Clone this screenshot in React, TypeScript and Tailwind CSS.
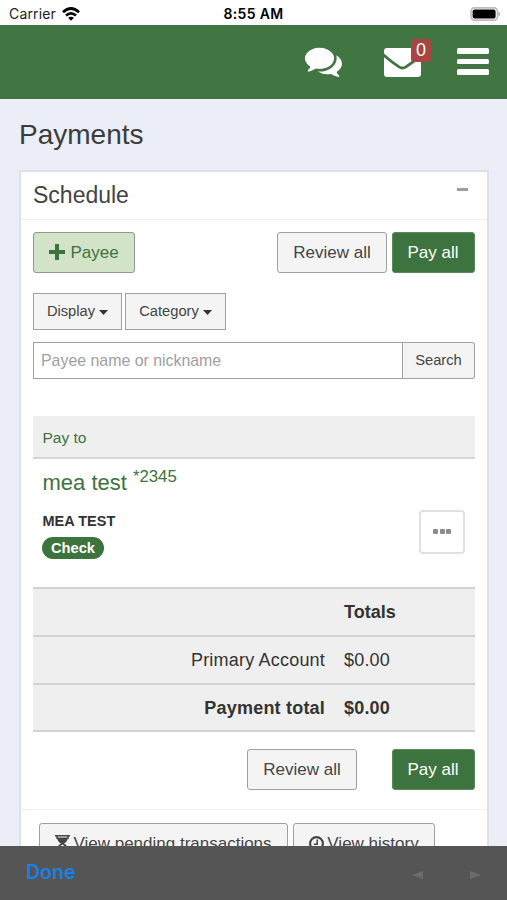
import React from "react";

function Comments() {
  return (
    <svg viewBox="0 128 1792 1536" className="h-[32px] w-[37px] fill-white">
      <path d="M1408 768q0 139-94 257t-256.5 186.5-353.5 68.5q-86 0-176-16-124 88-278 128-36 9-86 16h-3q-11 0-20.5-8t-11.5-21q-1-3-1-6.5t.5-6.5 2-6l2.5-5 3.5-5.5 4-5 4.5-5 4-4.5q5-6 23-25t26-29.5 22.5-29 25-38.5 20.5-44q-124-72-195-177t-71-224q0-139 94-257t256.5-186.5 353.5-68.5 353.5 68.5 256.5 186.5 94 257zm384 256q0 120-71 224.5t-195 176.5q10 24 20.5 44t25 38.5 22.5 29 26 29.5 23 25q1 1 4 4.5t4.5 5 4 5 3.5 5.5l2.5 5 2 6 .5 6.5-1 6.5q-3 14-13 22t-22 7q-50-7-86-16-154-40-278-128-90 16-176 16-271 0-472-132 58 4 88 4 161 0 309-45t264-129q125-92 192-212t67-254q0-77-23-152 129 71 204 178t75 230z" />
    </svg>
  );
}

function Envelope() {
  return (
    <svg viewBox="0 0 37 29" className="h-[29px] w-[37px]">
      <rect width="37" height="29" rx="3" fill="#fff" />
      <path d="M-1 6.5 C5 12 10 15.5 15 18.8 Q18.5 21.2 22 18.8 C27 15.5 32 12 38 6.5" fill="none" stroke="#417542" strokeWidth="2.7" />
    </svg>
  );
}

function Wifi() {
  return (
    <svg viewBox="0 0 18 14" className="h-[14px] w-[18px]" fill="none" stroke="#000" strokeWidth="2.7">
      <path d="M1 5.2 Q9 -2.2 17 5.2" />
      <path d="M4 8.6 Q9 4 14 8.6" />
      <path d="M9 13.7 L6.1 10.8 Q9 8.5 11.9 10.8 Z" fill="#000" stroke="none" />
    </svg>
  );
}

function Battery() {
  return (
    <svg viewBox="0 0 31 14" className="h-[14px] w-[31px]">
      <rect x="1" y="0.9" width="26.5" height="12.2" rx="3.5" fill="#fff" stroke="#bdbdbd" strokeWidth="1.6" />
      <rect x="2.6" y="2.5" width="23" height="9" rx="2" fill="#000" />
      <path d="M28.5 4.8 Q30.3 5.5 30.3 7 Q30.3 8.5 28.5 9.2Z" fill="#aaa" />
    </svg>
  );
}

function Hourglass() {
  return (
    <svg viewBox="0 0 15 17" className="h-[17px] w-[15px] fill-[#444]">
      <path d="M0 0H15V1.6H0zM0 15.4H15V17H0zM2 2.4H13Q12.4 6.6 9 8.5Q13 10.7 13.4 15.4H11.8Q11.5 11.6 7.5 9.6Q3.5 11.6 3.2 15.4H1.6Q2 10.7 6 8.5Q2.6 6.6 2 2.4Z" />
      <path d="M1.3 1H2.8V4H1.3zM12.2 1H13.7V4H12.2z" />
    </svg>
  );
}

function Clock() {
  return (
    <svg viewBox="0 0 15 15" className="h-[15px] w-[15px]" fill="none" stroke="#444">
      <circle cx="7.5" cy="7.5" r="6.4" strokeWidth="2.1" />
      <path d="M8.2 3.4V8.2H4.8" strokeWidth="1.5" />
    </svg>
  );
}

function Caret() {
  return (
    <svg viewBox="0 0 9 5" className="mt-0.5 h-[5px] w-[9px] fill-[#333]">
      <path d="M0 0H9L4.5 5Z" />
    </svg>
  );
}

const grayBtn = "flex items-center justify-center rounded-[3px] border border-[#a0a0a0] bg-[#f4f4f4] text-[17px] text-[#444]";
const greenBtn = "flex h-[41px] w-[83px] items-center justify-center rounded-[3px] border border-[#5c8a5f] bg-[#3d733e] pr-px text-[17px] text-white";
const dropBtn = "flex items-center justify-center border border-[#a0a0a0] bg-[#f4f4f4] text-[14.7px] text-[#444]";

export default function App() {
  return (
    <div className="flex h-[900px] w-[507px] flex-col overflow-hidden bg-[#ebeef6] font-['Liberation_Sans',Arial,sans-serif] text-[#333]">
      <div className="grid h-[25px] shrink-0 grid-cols-3 items-center bg-white pt-[2px] pr-[6px] pl-[9px] font-[Inter,sans-serif] text-[14px] text-[#222]">
        <div className="flex items-center gap-[6px]">
          <span className="tracking-[0.15px]">Carrier</span>
          <Wifi />
        </div>
        <div className="pr-[3px] text-center font-semibold tracking-[0.35px] whitespace-nowrap text-black">8:55 AM</div>
        <div className="flex justify-end">
          <Battery />
        </div>
      </div>

      <header className="flex h-[74px] shrink-0 items-start justify-end bg-[#417542] pr-[18px]">
        <div className="mt-[20px] mr-[42px]">
          <Comments />
        </div>
        <div className="relative mt-[23px] mr-[36px]">
          <Envelope />
          <span className="absolute -top-[9px] left-[27px] flex h-[23px] w-[20px] items-center justify-center rounded-[3px] bg-[#a94442] text-[18px] text-white">0</span>
        </div>
        <div className="mt-[23px] flex flex-col gap-[5px]">
          <i className="h-[5.5px] w-[32px] rounded-[1.5px] bg-white" />
          <i className="h-[5.5px] w-[32px] rounded-[1.5px] bg-white" />
          <i className="h-[5.5px] w-[32px] rounded-[1.5px] bg-white" />
        </div>
      </header>

      <main className="min-h-0 flex-1 overflow-hidden pr-[18px] pl-[19px]">
        <h1 className="h-[71px] pt-[19px] text-[28px] leading-[34px] text-[#3a3c40]">Payments</h1>
        <section className="h-[720px] border-x-2 border-t-2 border-[#dfe1e8] bg-white">
          <div className="flex h-[48px] items-start justify-between border-b border-[#f0f0f0] pr-[19px] pl-3">
            <h2 className="pt-[9px] text-[23px] leading-[28px] text-[#444]">Schedule</h2>
            <i className="mt-[16px] h-[3px] w-[11px] bg-[#97a0b3]" />
          </div>

          <div className="pr-[12px] pl-[12px]">
            <div className="mt-[12px] flex justify-between">
              <button className="flex h-[41px] w-[102px] items-center justify-center gap-[5px] rounded-[3px] border border-[#8f998d] bg-[#d2e3c8] text-[17px] text-[#3d733e]">
                <svg viewBox="0 0 16 16" className="mb-[2px] h-[16px] w-[16px] fill-[#3d733e]">
                  <path d="M6 0H10V6H16V10H10V16H6V10H0V6H6Z" />
                </svg>
                Payee
              </button>
              <div className="flex gap-[5px]">
                <button className={grayBtn + " h-[41px] w-[110px]"}>Review all</button>
                <button className={greenBtn}>Pay all</button>
              </div>
            </div>

            <div className="mt-[20px] flex gap-[3px]">
              <button className={dropBtn + " h-[37px] w-[89px] gap-[4px]"}>Display <Caret /></button>
              <button className={dropBtn + " h-[37px] w-[101px] gap-[4px]"}>Category <Caret /></button>
            </div>

            <div className="mt-[12px] flex h-[37px]">
              <div className="flex flex-1 items-center border border-[#a0a0a0] pl-[7px] text-[15.9px] text-[#a0a0a0]">Payee name or nickname</div>
              <button className="w-[72px] rounded-r-[3px] border border-l-0 border-[#a0a0a0] bg-[#f4f4f4] text-[14.7px] text-[#444]">Search</button>
            </div>

            <div className="mt-[37px] h-[43px] border-b-2 border-[#d5d5d5] bg-[#efefef] pt-[12px] pl-[9.5px] text-[15.5px] leading-[20px] text-[#3d733e]">Pay to</div>

            <div className="flex h-[128px] justify-between pr-[10px] pl-[9px]">
              <div>
                <div className="flex h-[53px] gap-[6px] pl-[0.5px] text-[#3d733e]">
                  <span className="pt-[11px] text-[22px] leading-[26px]">mea test</span>
                  <span className="pt-[8px] text-[16.8px] leading-[20px]">*2345</span>
                </div>
                <div className="h-[25px] pl-[0.5px] text-[14.5px] leading-[18px] font-bold">MEA TEST</div>
                <span className="flex h-[22px] w-[62px] items-center justify-center rounded-full bg-[#3d733e] text-[14.7px] font-bold text-white">Check</span>
              </div>
              <button className="mt-[51px] flex h-[44px] w-[46px] items-center justify-center gap-[1.5px] rounded-[4px] border-2 border-[#e0e0e0] pb-px">
                <i className="h-[5px] w-[5px] rounded-[1px] bg-[#8c8c8c]" />
                <i className="h-[5px] w-[5px] rounded-[1px] bg-[#8c8c8c]" />
                <i className="h-[5px] w-[5px] rounded-[1px] bg-[#8c8c8c]" />
              </button>
            </div>

            <div className="border-b-2 border-[#d2d2d2] bg-[#efefef] text-[18px] tracking-[0.2px]">
              <div className="flex h-[48px] items-center border-t-2 border-[#d2d2d2] pt-px pl-[311px] font-bold tracking-[0px]">Totals</div>
              <div className="flex h-[48px] items-center border-t-2 border-[#d2d2d2] pt-px">
                <span className="w-[292px] text-right">Primary Account</span>
                <span className="ml-[19px]">$0.00</span>
              </div>
              <div className="flex h-[47px] items-center border-t-2 border-[#d2d2d2] pt-[2px] font-bold">
                <span className="w-[292px] text-right">Payment total</span>
                <span className="ml-[19px]">$0.00</span>
              </div>
            </div>

            <div className="mt-[17px] flex justify-end gap-[35px]">
              <button className={grayBtn + " h-[41px] w-[110px]"}>Review all</button>
              <button className={greenBtn}>Pay all</button>
            </div>
          </div>

          <div className="mt-[19px] flex gap-[5px] border-t border-[#f0f0f0] pt-[13px] pl-[18px]">
            <button className={grayBtn + " h-[41px] w-[249px] gap-[3px]"}><Hourglass />View pending transactions</button>
            <button className={grayBtn + " h-[41px] w-[142px] gap-[3px]"}><Clock />View history</button>
          </div>
        </section>
      </main>

      <footer className="flex h-[54px] shrink-0 items-center justify-between bg-[#555] pr-[26px] pl-[26px]">
        <span className="font-[Inter,sans-serif] text-[19.5px] font-semibold text-[#1a80e6]">Done</span>
        <div className="mt-[4px] flex gap-[47px]">
          <svg viewBox="0 0 11 8" className="h-[8px] w-[11px] fill-[#6b6b6b]"><path d="M11 0V8L0 4Z" /></svg>
          <svg viewBox="0 0 11 8" className="h-[8px] w-[11px] fill-[#6b6b6b]"><path d="M0 0V8L11 4Z" /></svg>
        </div>
      </footer>
    </div>
  );
}
